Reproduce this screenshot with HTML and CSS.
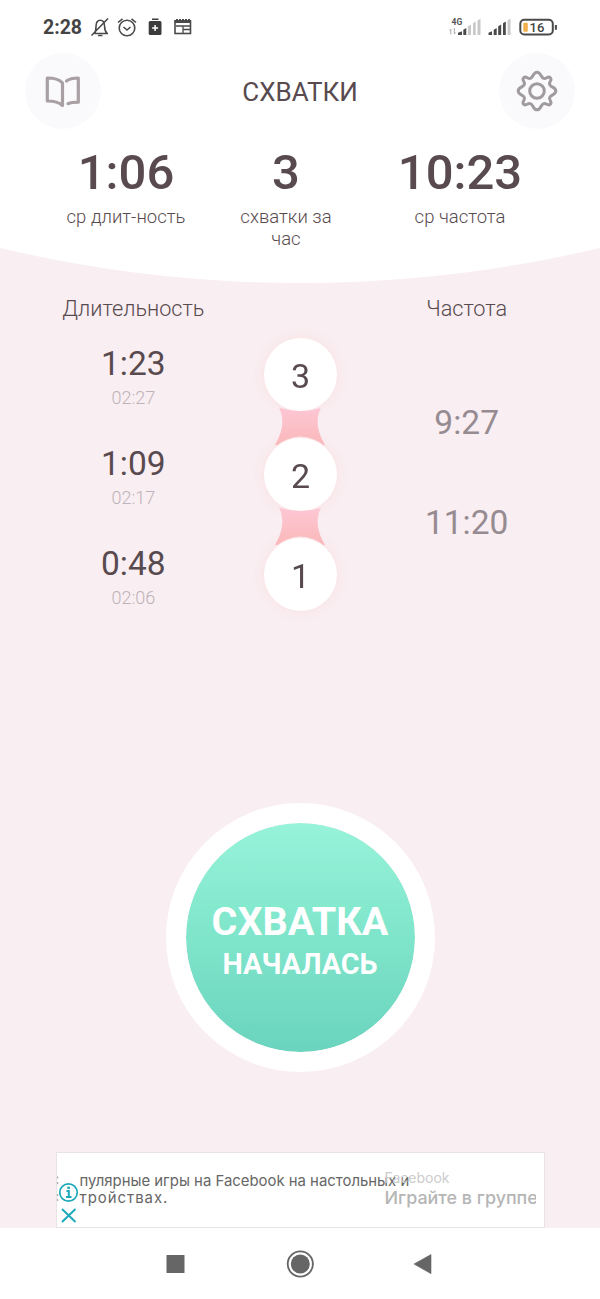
FILE: index.html
```html
<!DOCTYPE html>
<html lang="ru">
<head>
<meta charset="utf-8">
<title>Схватки</title>
<link rel="stylesheet" href="styles.css">
</head>
<body>
<div class="screen">
  <header class="top">
    <div class="status">
      <span class="clock">2:28</span>
      <svg class="status-icons" width="106" height="24" viewBox="88 15 106 24" fill="none" stroke="#4a4a4a" stroke-width="1.6">
        <path d="M94.500 33.500h13.500M94.500 33.500c1.500-2 1.500-4 1.500-7 0-4 1.500-6.300 4.300-6.300s4.300 2.300 4.300 6.300c0 3 .4 5 2.600 7M91.500 35.500l16.500-17"/>
        <path d="M98 35.500h4.500"/>
        <circle cx="127" cy="28" r="7.800"/><path d="M123.500 27l3.500 3 3.500-3M118 22.500l4.500-3.700M136 22.500l-4.500-3.700"/>
        <rect x="148.700" y="21" width="12.800" height="14" rx="1.500" fill="#3c3c3c" stroke="none"/>
        <path d="M152 19.200h6.500" stroke="#3c3c3c" stroke-width="1.500"/><path d="M155.100 25v6M152.100 28h6" stroke="#fff" stroke-width="1.500"/>
        <rect x="175" y="21" width="15.500" height="12.500"/><path d="M174.500 21.500h16.500" stroke-width="3"/><path d="M176 26h14M183 29.500h7M183 26v7" stroke-width="1.300"/><path d="M176 19.500h14" stroke-width="1" stroke-dasharray="2 1"/>
      </svg>
      <div class="signals">
        <svg width="33" height="22" viewBox="449 15 33 22">
          <text class="net" x="451.500" y="25">4G</text>
          <path d="M450.800 34.500v-5.500m-1.300 1.500l1.300-1.500M454.300 28v6m1.300-1.500l-1.300 1.500" fill="none" stroke="#aaa" stroke-width="1"/>
          <path d="M458 35v-2.300l4-1.500V35zM463.300 35v-5.300l3-1.700v7z" fill="#4a4a4a"/>
          <path d="M468 35v-8.700l3-1.700V35zM473 35V23.300l2.700-1.700V35zM477.500 35V20.500l3-1.800V35z" fill="#c9c9c9"/>
        </svg>
        <svg width="24" height="22" viewBox="488 15 24 22">
          <path d="M488.500 35v-2.300l3.500-1.500V35zM493.700 35v-5.300l3-1.700v7zM498.200 35v-8.700l3-1.700V35zM503 35V23.300l2.800-1.700V35z" fill="#4a4a4a"/>
          <path d="M507.600 35V20.500l2.900-1.800V35z" fill="#c9c9c9"/>
        </svg>
        <svg width="40" height="22" viewBox="518 15 40 22">
          <rect x="520.300" y="19.800" width="32.500" height="14.700" rx="4" fill="#fff" stroke="#4a4a4a" stroke-width="2"/>
          <rect x="523.300" y="22.700" width="4.500" height="9" rx="1" fill="#f2b04c"/>
          <path d="M555.900 25v4.700" stroke="#4a4a4a" stroke-width="2"/>
          <text class="battery" x="529.500" y="32">16</text>
        </svg>
      </div>
    </div>

    <div class="titlebar">
      <div class="round-btn">
        <svg width="76" height="76" viewBox="25 53 76 76" fill="none" stroke="#a8a0a2" stroke-width="3.200" stroke-linecap="round" stroke-linejoin="round">
          <path d="M62.500 105.500C58.500 101.700 53.500 101 47.300 101V78C53.500 78 59 79 62.500 83z"/>
          <path d="M66.500 81C69.500 78.600 73.500 78 78.300 78v24.200c-3.800 0-7.300.2-10.300 1.500"/>
        </svg>
      </div>
      <h1 class="title">СХВАТКИ</h1>
      <div class="round-btn">
        <svg width="76" height="76" viewBox="-38 -38 76 76" fill="none" stroke="#a09b9c" stroke-width="3" stroke-linejoin="round">
          <circle r="7.300"/>
          <path d="M0-18.800C4-18.800 3.400-13.600 6.700-12.600C9.500-11.800 10.700-15.400 13.300-13.300C15.700-10.700 11.800-9.500 12.600-6.700C13.600-3.400 18.800-4 18.800 0C18.800 4 13.600 3.400 12.600 6.700C11.800 9.500 15.700 10.700 13.300 13.300C10.700 15.400 9.500 11.800 6.700 12.600C3.400 13.600 4 18.800 0 18.800C-4 18.800-3.400 13.600-6.700 12.600C-9.500 11.800-10.700 15.400-13.300 13.300C-15.700 10.700-11.800 9.500-12.600 6.700C-13.600 3.400-18.800 4-18.800 0C-18.800-4-13.600-3.400-12.600-6.700C-11.800-9.500-15.700-10.700-13.300-13.300C-10.700-15.400-9.500-11.800-6.700-12.600C-3.400-13.600-4-18.800 0-18.800z"/>
        </svg>
      </div>
    </div>

    <div class="stats">
      <div class="stat"><b>1:06</b><span>ср длит-ность</span></div>
      <div class="stat"><b>3</b><span>схватки за<br>час</span></div>
      <div class="stat"><b>10:23</b><span>ср частота</span></div>
    </div>
  </header>

  <main class="history">
    <section class="col">
      <h2>Длительность</h2>
      <div class="duration"><strong>1:23</strong><small>02:27</small></div>
      <div class="duration"><strong>1:09</strong><small>02:17</small></div>
      <div class="duration"><strong>0:48</strong><small>02:06</small></div>
    </section>
    <section class="nodes">
      <div class="node">3</div>
      <svg class="link" width="52" height="47" viewBox="0 0 52 47">
        <defs><linearGradient id="pink" x1="0" y1="0" x2="0" y2="1"><stop offset=".2" stop-color="#fdc6d2"/><stop offset="1" stop-color="#fab8ba"/></linearGradient></defs>
        <path d="M1 0C7 8 14 22 1 44H51C38 22 45 8 51 0z" fill="url(#pink)"/>
      </svg>
      <div class="node">2</div>
      <svg class="link" width="52" height="47" viewBox="0 0 52 47">
        <path d="M1 0C7 8 14 22 1 44H51C38 22 45 8 51 0z" fill="url(#pink)"/>
      </svg>
      <div class="node">1</div>
    </section>
    <section class="col">
      <h2>Частота</h2>
      <div class="intervals"><span>9:27</span><span>11:20</span></div>
    </section>
  </main>

  <div class="action">
    <button class="start"><span class="start-main">СХВАТКА</span><span class="start-sub">НАЧАЛАСЬ</span></button>
  </div>

  <aside class="ad">
    <svg class="ad-icons" width="25" height="48" viewBox="55 1180 25 48" fill="none" stroke="#1ca9b9" stroke-width="1.700">
      <path d="M57.500 1176.500v2M57.500 1182v2M57.500 1194v2M57.500 1199v2" stroke="#aaa" stroke-width="1.500"/>
      <circle cx="68.500" cy="1192.500" r="8.700"/><path d="M66.500 1191h2.300v5.500M66 1197h5.500" stroke-width="2"/><path d="M67.300 1187.800h2.600" stroke-width="2.300"/>
      <path d="M62 1209l13.500 13M75.500 1209L62 1222" stroke-width="2"/>
    </svg>
    <p class="ad-text"><span>пулярные игры на Facebook на настольных и</span><span class="ad-line2">тройствах.</span></p>
    <div class="ad-next"><span>Facebook</span><b>Играйте в группе</b></div>
  </aside>

  <nav class="navbar">
    <svg width="600" height="71" viewBox="0 1228 600 71" fill="#666">
      <rect x="166.500" y="1255" width="18" height="18" rx=".5"/>
      <circle cx="300.300" cy="1264" r="9.500"/><circle cx="300.300" cy="1264" r="12.600" fill="none" stroke="#666" stroke-width="1.900"/>
      <path d="M431 1254.500v19.200l-17-9.700z" stroke="#666" stroke-width=".6" stroke-linejoin="round"/>
    </svg>
  </nav>
</div>
</body>
</html>
```
FILE: styles.css
```css
* { box-sizing: border-box; }
body { margin: 0; font-family: Roboto, "Noto Sans", sans-serif; color: #584a4e; }
.screen { width: 600px; height: 1299px; display: flex; flex-direction: column; background: #f9eef2; overflow: hidden; }

.top { height: 283px; flex: none; background: #fff; clip-path: circle(1303px at 50% calc(100% - 1303px)); }
.status { height: 53px; display: flex; align-items: flex-start; padding: 15px 42px 0 43px; }
.clock { width: 45px; font-size: 19.500px; line-height: 25px; font-weight: 700; color: #444; }
.signals { margin-left: auto; display: flex; gap: 6px; }
.net { font: 700 8.500px Roboto, sans-serif; fill: #555; }
.battery { font: 500 13px Roboto, sans-serif; fill: #444; }

.titlebar { display: flex; justify-content: space-between; align-items: center; height: 76px; padding: 0 25px; }
.round-btn { width: 76px; height: 76px; border-radius: 50%; background: #fafafc; }
.round-btn svg { display: block; }
.title { margin: 2px 0 0; font-size: 26px; font-weight: 400; }

.stats { display: grid; grid-template-columns: 160px 160px 188px; padding: 14px 46px 0; text-align: center; }
.stat b { display: block; font-size: 49px; line-height: 60px; font-weight: 500; }
.stat span { display: block; margin-top: 3px; font-size: 18.500px; line-height: 22px; font-weight: 300; }

.history { display: grid; grid-template-columns: repeat(3, 1fr); height: 400px; flex: none; padding: 13px 50px 0; text-align: center; }
.col h2 { margin: 0; font-size: 21.700px; line-height: 26px; font-weight: 300; white-space: nowrap; }
.duration { height: 100px; padding-top: 21px; }
.duration strong { display: block; font-size: 33.500px; line-height: 42px; font-weight: 400; }
.duration small { display: block; margin-top: 2px; font-size: 18px; line-height: 22px; font-weight: 300; color: #bdb3b8; }
.nodes { display: flex; flex-direction: column; align-items: center; padding: 42px 0 0 1px; }
.node { width: 73px; height: 73px; flex: none; z-index: 1; border-radius: 50%; background: #fff; font-size: 34px; line-height: 77px; }
.node { filter: drop-shadow(0 0 6px #fae1e1); }
.link { margin: -10px 0; flex: none; z-index: 2; clip-path: path("M0 5Q26 15 52 5V46Q26 25 0 46z"); }
.intervals { display: flex; flex-direction: column; padding-top: 51px; }
.intervals span { height: 100px; font-size: 33.500px; line-height: 100px; color: #968b91; }

.action { display: flex; justify-content: center; padding: 120px 0 0; }
.start { width: 269px; height: 269px; padding: 0; border: 20px solid #fff; border-radius: 50%; background: linear-gradient(#97f3da, #83e8cd 40%, #6bd4be) padding-box; font-family: inherit; color: #fff; display: flex; flex-direction: column; align-items: center; justify-content: center; }
.start-main { font-size: 39.500px; line-height: 46px; font-weight: 700; margin-top: 6px; }
.start-sub { font-size: 28.700px; line-height: 38px; font-weight: 700; }

.ad { width: 489px; height: 76px; margin: auto 0 0 55.500px; display: flex; background: #fff; border: 1px solid #e9e3e6; font-family: Inter, "Noto Sans", sans-serif; overflow: hidden; }
.ad-icons { flex: none; margin: 27px 0 0 -2px; overflow: visible; }
.ad-text { margin: 20px 0 0; flex: none; width: 305px; white-space: nowrap; font-size: 14.900px; line-height: 17px; color: #666; }
.ad-text span { display: block; }
.ad-text .ad-line2 { letter-spacing: 1px; }
.ad-next { width: 151px; padding-top: 15px; overflow: hidden; white-space: nowrap; }
.ad-next span { display: block; font-size: 14px; line-height: 20px; color: #ccc; }
.ad-next b { display: block; font-size: 17.900px; line-height: 20px; font-weight: 500; color: #b5b5b5; }
.navbar { height: 71px; flex: none; background: #fff; }
.navbar svg { display: block; }
```
